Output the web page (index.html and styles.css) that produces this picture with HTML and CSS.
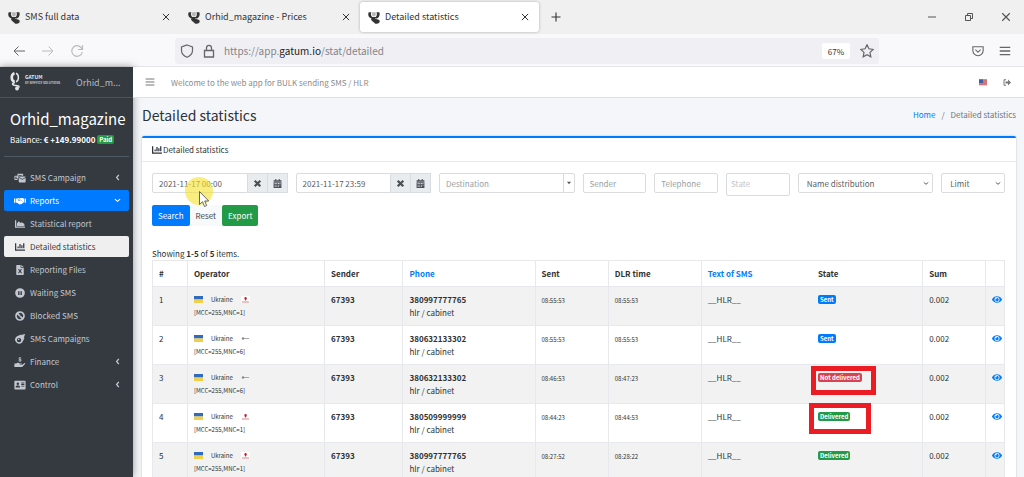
FILE: index.html
```html
<!DOCTYPE html>
<html lang="en">
<head>
<meta charset="utf-8">
<title>Detailed statistics</title>
<link rel="stylesheet" href="styles.css">
</head>
<body>
<svg class="sprite" aria-hidden="true">
  <symbol id="i-eye" viewBox="0 0 576 512"><path d="M572.52 241.4C518.29 135.59 410.93 64 288 64S57.68 135.64 3.48 241.41a32.35 32.35 0 0 0 0 29.19C57.71 376.41 165.07 448 288 448s230.32-71.64 284.52-177.41a32.35 32.35 0 0 0 0-29.19zM288 400a144 144 0 1 1 144-144 143.93 143.93 0 0 1-144 144zm0-240a95.31 95.31 0 0 0-25.31 3.79 47.85 47.85 0 0 1-66.9 66.9A95.78 95.78 0 1 0 288 160z"/></symbol>
  <symbol id="i-bar" viewBox="0 0 512 512"><path d="M0 64h64v320h448v64H0zM128 224h64v96h-64zM224 96h64v224h-64zM320 160h64v160h-64zM416 64h64v256h-64z"/></symbol>
  <symbol id="i-area" viewBox="0 0 512 512"><path d="M0 64h64v320h448v64H0zM96 352V230l96-118 96 96 64-48 128 90v102z"/></symbol>
  <symbol id="i-mail" viewBox="0 0 576 512"><path d="M160 32h288v110h-80v-30H208v144h-48v96H32c-18 0-32-14-32-32V176c0-18 14-32 32-32h128zM240 176h304c18 0 32 12 32 28L408 310 224 204c0-16 6-28 16-28zM224 246l184 104 168-104v202c0 18-14 32-32 32H256c-18 0-32-14-32-32zM30 190h100v40H30zM30 260h100v30H30z" fill-rule="evenodd"/></symbol>
  <symbol id="i-hands" viewBox="0 0 640 512"><path d="M0 128h64v224H0zM96 128h100l60-32h64l-96 96c-10 50 50 90 96 40l40-24 136 116c10 60-40 60-60 60-20 40-50 50-74 36-24 30-60 24-78 8L160 350H96zM350 96h100l60 32h34v210h-26L370 190l-86 30c-20 10-36-6-24-24zM576 128h64v224h-64z"/></symbol>
  <symbol id="i-file" viewBox="0 0 384 512"><path fill-rule="evenodd" d="M24 0h200v136h160v352c0 14-10 24-24 24H24c-14 0-24-10-24-24V24C0 10 10 0 24 0zM256 0l128 104H256zM90 210l64 100-66 106h58l46-72 46 72h58l-66-106 64-100h-56l-46 68-46-68z"/></symbol>
  <symbol id="i-pause" viewBox="0 0 512 512"><path fill-rule="evenodd" d="M256 8a248 248 0 1 0 0 496 248 248 0 0 0 0-496zM160 160h72v192h-72zM280 160h72v192h-72z"/></symbol>
  <symbol id="i-ban" viewBox="0 0 512 512"><path fill-rule="evenodd" d="M256 8a248 248 0 1 0 0 496 248 248 0 0 0 0-496zM115 180l217 217A158 158 0 0 1 115 180zM180 115a158 158 0 0 1 217 217zM210 190l90 0 24 100z"/></symbol>
  <symbol id="i-meteor" viewBox="0 0 512 512"><path fill-rule="evenodd" d="M491 1C452 12 380 34 307 61l7-41C240 44 150 80 72 140a200 200 0 1 0 292 292c50-70 100-180 128-236l-42 8c26-70 50-150 61-187 2-10-8-19-20-16zM208 200a112 112 0 1 1 0 224 112 112 0 0 1 0-224zM190 240a36 36 0 1 0 0 72 36 36 0 0 0 0-72z"/></symbol>
  <symbol id="i-money" viewBox="0 0 576 512"><path d="M0 328h100c70-50 140-20 180 0h90c30 10 24 50-10 56h-90v20h110l130-90c30-14 60 14 36 46L410 496c-10 10-20 16-34 16H0zM270 0h36v30c34 4 50 20 56 44h-44c-10-22-70-14-52 12 20 20 96 16 98 78 0 40-26 54-58 60v32h-36v-32c-40-4-58-24-62-54h46c10 30 72 22 62-6-20-24-98-16-98-78 0-30 20-52 52-56z"/></symbol>
  <symbol id="i-card" viewBox="0 0 576 512"><path fill-rule="evenodd" d="M48 32h480c28 0 48 20 48 48v352c0 28-20 48-48 48H48c-28 0-48-20-48-48V80c0-28 20-48 48-48zM176 128a64 64 0 1 0 0 128 64 64 0 0 0 0-128zM64 380h224c0-60-40-96-70-96h-84c-40 0-70 40-70 96zM352 130h160v44H352zM352 210h160v40H352zM352 290h160v40H352z"/></symbol>
  <symbol id="i-left" viewBox="0 0 10 16"><path d="M8 2 3 8l5 6" fill="none" stroke="currentColor" stroke-width="3"/></symbol>
  <symbol id="i-down" viewBox="0 0 16 10"><path d="m2 2 6 5 6-5" fill="none" stroke="currentColor" stroke-width="2.5"/></symbol>
  <symbol id="i-cal" viewBox="0 0 448 512"><path fill-rule="evenodd" d="M96 0h60v64h136V0h60v64h96v96H0V64h96zM0 184h448v328H0zM60 230v50h60v-50zM160 230v50h50v-50zM250 230v50h50v-50zM340 230v50h50v-50zM60 320v50h60v-50zM160 320v50h50v-50zM250 320v50h50v-50zM340 320v50h50v-50zM60 410v50h60v-50zM160 410v50h50v-50zM250 410v50h50v-50z"/></symbol>
  <symbol id="i-times" viewBox="0 0 16 16"><path d="m3 3 10 10M13 3 3 13" fill="none" stroke="currentColor" stroke-width="4"/></symbol>
  <symbol id="i-close" viewBox="0 0 16 16"><path d="m3 3 10 10M13 3 3 13" fill="none" stroke="currentColor" stroke-width="1.6"/></symbol>
  <symbol id="i-bars" viewBox="0 0 16 16"><path d="M1 3.2h14M1 8h14M1 12.8h14" fill="none" stroke="currentColor" stroke-width="1.8"/></symbol>
  <symbol id="i-gatum" viewBox="0 0 16 16"><path d="M2 2.500h3c-.8 2-.5 4 1 5.500h4c1.500-1.500 1.600-3.500.8-5.500h3.400c.8 3-.2 6-2.700 7.300H9c0 .9 5 .4 5.500 2.900.3 2-1.500 3-3.500 3-2.500 0-2.500-1.600-4.500-2.700C4.500 12 4.500 10.500 5 9.500 1.500 8.500.8 5 2 2.500z" fill="#333"/><path d="M6 2.500h3.800c.6 2 .3 3.500-.8 4.500H6.800C5.700 6 5.500 4 6 2.500z" fill="#b5b5b5"/></symbol>
  <symbol id="i-ua" viewBox="0 0 9 7"><path d="M0 0h9v3.5H0z" fill="#2f6cc0"/><path d="M0 3.5h9V7H0z" fill="#f2cf4a"/></symbol>
  <symbol id="i-voda" viewBox="0 0 9 7"><path d="M0 0h9v7H0z" fill="#fff"/><path d="M4.500 1a1.300 1.300 0 0 1 1 2.200L4.800 4.600h-.7L3.700 3.200A1.300 1.300 0 0 1 4.500 1z" fill="#c5222b"/><path d="M1 5.500h7v1H1z" fill="#d78288"/></symbol>
  <symbol id="i-life" viewBox="0 0 9 7"><path d="M1 3.500h7" stroke="#a5a8aa" stroke-width="1"/><circle cx="2" cy="3.500" r="1.200" fill="#888"/></symbol>
</svg>

<div class="browser">
  <header class="tabs">
    <div class="tab"><svg class="fav"><use href="#i-gatum"/></svg><span>SMS full data</span><button class="plain" aria-label="Close tab"><svg class="ico10"><use href="#i-close"/></svg></button></div>
    <div class="tab"><svg class="fav"><use href="#i-gatum"/></svg><span>Orhid_magazine - Prices</span><button class="plain" aria-label="Close tab"><svg class="ico10"><use href="#i-close"/></svg></button></div>
    <div class="tab tab-on"><svg class="fav"><use href="#i-gatum"/></svg><span>Detailed statistics</span><button class="plain" aria-label="Close tab"><svg class="ico10"><use href="#i-close"/></svg></button></div>
    <button class="plain newtab" aria-label="New tab"><svg class="ico12" viewBox="0 0 16 16"><path d="M8 2v12M2 8h12" fill="none" stroke="currentColor" stroke-width="1.500"/></svg></button>
    <div class="wins">
      <button class="plain" aria-label="Minimize"><svg class="ico12" viewBox="0 0 12 12"><path d="M2 6h8" stroke="currentColor"/></svg></button>
      <button class="plain" aria-label="Restore"><svg class="ico12" viewBox="0 0 12 12"><path d="M2.500 4.500h5v5h-5zM4.500 4V2.500h5v5H8" fill="none" stroke="currentColor"/></svg></button>
      <button class="plain" aria-label="Close window"><svg class="ico12"><use href="#i-close"/></svg></button>
    </div>
  </header>

  <nav class="toolbar" aria-label="Browser">
    <button class="plain" aria-label="Back"><svg class="ico14" viewBox="0 0 14 14"><path d="M13 7H2M6.500 2.500 2 7l4.500 4.500" fill="none" stroke="currentColor"/></svg></button>
    <button class="plain dim" aria-label="Forward"><svg class="ico14" viewBox="0 0 14 14"><path d="M1 7h11M7.500 2.500 12 7l-4.500 4.500" fill="none" stroke="currentColor"/></svg></button>
    <button class="plain dim" aria-label="Reload"><svg class="ico14" viewBox="0 0 14 14"><path d="M12 5A5.300 5.300 0 1 0 12.300 8M12.500 1v4.500H8" fill="none" stroke="currentColor" stroke-width="1.200"/></svg></button>
    <div class="address">
      <svg class="ico14" viewBox="0 0 14 14"><path d="M7 1 12.500 3v3.500C12.500 10 10 12 7 13.300 4 12 1.500 10 1.500 6.500V3z" fill="none" stroke="currentColor" stroke-width="1.200"/></svg>
      <svg class="ico14" viewBox="0 0 14 14"><path d="M2.500 6.500h9v6.500h-9zM4.500 6.500V4a2.500 2.700 0 0 1 5 0v2.500" fill="none" stroke="currentColor" stroke-width="1.300"/></svg>
      <span class="url">https://app.<b>gatum.io</b>/stat/detailed</span>
      <button class="zoom">67%</button>
      <button class="plain" aria-label="Bookmark"><svg class="ico14" viewBox="0 0 14 14"><path d="m7 .8 1.900 4 4.300.600-3.200 3 .800 4.400L7 10.700l-3.800 2.100.800-4.400-3.200-3 4.300-.600z" fill="none" stroke="currentColor" stroke-width="1.200"/></svg></button>
    </div>
    <button class="plain pocket" aria-label="Pocket"><svg class="ico12" viewBox="0 0 14 14"><path d="M1 2h12v4.500a6 6 0 0 1-12 0zM4 5.500l3 3 3-3" fill="none" stroke="currentColor" stroke-width="1.300"/></svg></button>
    <button class="plain" aria-label="Menu"><svg class="ico12"><use href="#i-bars"/></svg></button>
  </nav>

  <div class="app">
    <aside class="side">
      <a class="brand" href="#">
        <svg class="logo" viewBox="0 0 54 20"><g fill="none" stroke="#e4e6e8"><path d="M4.500 1.200C.8 2.500.8 8.500 4.500 9.800" stroke-width="2.600"/><path d="M6 1.200c3.200 1.200 3.200 7.400 0 8.600" stroke-width="1.500"/><path d="M5 10.500c-4 .8-2.500 3 .5 3 3 0 4 1 3 2" stroke-width="1.700"/></g><circle cx="7" cy="16.500" r="1.900" fill="#e4e6e8"/><text x="15" y="7" class="logo-a">GATUM</text><text x="15" y="12" class="logo-b">BY SEMYICE SOLUTIONS</text></svg>
        <span>Orhid_m...</span>
      </a>
      <div class="user">
        <h2>Orhid_magazine</h2>
        <p>Balance: <b>€ +149.99000</b> <span class="badge green">Paid</span></p>
      </div>
      <nav class="menu" aria-label="Main">
        <a href="#"><svg><use href="#i-mail"/></svg><span>SMS Campaign</span><svg class="arr"><use href="#i-left"/></svg></a>
        <a href="#" class="blue"><svg><use href="#i-hands"/></svg><span>Reports</span><svg class="arr"><use href="#i-down"/></svg></a>
        <a href="#"><svg><use href="#i-area"/></svg><span>Statistical report</span></a>
        <a href="#" class="light"><svg><use href="#i-bar"/></svg><span>Detailed statistics</span></a>
        <a href="#"><svg><use href="#i-file"/></svg><span>Reporting Files</span></a>
        <a href="#"><svg><use href="#i-pause"/></svg><span>Waiting SMS</span></a>
        <a href="#"><svg><use href="#i-ban"/></svg><span>Blocked SMS</span></a>
        <a href="#"><svg><use href="#i-meteor"/></svg><span>SMS Campaigns</span></a>
        <a href="#"><svg><use href="#i-money"/></svg><span>Finance</span><svg class="arr"><use href="#i-left"/></svg></a>
        <a href="#"><svg><use href="#i-card"/></svg><span>Control</span><svg class="arr"><use href="#i-left"/></svg></a>
      </nav>
    </aside>

    <div class="content">
      <div class="topbar">
        <button class="plain" aria-label="Toggle menu"><svg class="ico10"><use href="#i-bars"/></svg></button>
        <span class="welcome">Welcome to the web app for BULK sending SMS / HLR</span>
        <button class="plain" aria-label="Language"><svg class="flag" viewBox="0 0 8 6"><path d="M0 0h8v6H0z" fill="#e7a0a0"/><path d="M0 .5h8M0 2.500h8M0 4.500h8" stroke="#c8474d"/><path d="M0 0h4v3.500H0z" fill="#3f5f9f"/></svg></button>
        <button class="plain" aria-label="Log out"><svg class="flag" viewBox="0 0 16 14"><path d="M6 1.500H2v11h4" fill="none" stroke="currentColor" stroke-width="2"/><path d="M5 5h5V1l6 6-6 6V9H5z" fill="currentColor"/></svg></button>
      </div>
      <div class="head">
        <h1>Detailed statistics</h1>
        <nav class="crumbs" aria-label="Breadcrumb"><a href="#">Home</a><span>/</span><span>Detailed statistics</span></nav>
      </div>

      <main class="card">
        <h3 class="card-head"><svg class="ico10"><use href="#i-bar"/></svg>Detailed statistics</h3>
        <div class="card-body">
          <form>
            <div class="filters">
              <div class="group w2"><input aria-label="From" value="2021-11-17 00:00"><button type="button" aria-label="Clear from"><svg><use href="#i-times"/></svg></button><button type="button" aria-label="Pick from"><svg><use href="#i-cal"/></svg></button>
                <svg class="pointer" viewBox="0 0 28 32"><circle cx="14" cy="14" r="14" fill="#f7e12a" fill-opacity=".6"/><path d="M14.500 14.500v13l3-2.800 2 4.800 2.200-1-2-4.500h4z" fill="#fff" stroke="#444" stroke-width=".8"/></svg>
              </div>
              <div class="group w2"><input aria-label="To" value="2021-11-17 23:59"><button type="button" aria-label="Clear to"><svg><use href="#i-times"/></svg></button><button type="button" aria-label="Pick to"><svg><use href="#i-cal"/></svg></button></div>
              <div class="pick split w2"><select class="ph" aria-label="Destination"><option>Destination</option></select><svg class="caret" viewBox="0 0 6 4"><path d="M0 0h6L3 4z"/></svg></div>
              <input aria-label="Sender" placeholder="Sender">
              <input aria-label="Telephone" placeholder="Telephone">
              <input class="state" aria-label="State" placeholder="State">
              <div class="pick w2"><select aria-label="Name distribution"><option>Name distribution</option></select><svg class="caret"><use href="#i-down"/></svg></div>
              <div class="pick"><select aria-label="Limit"><option>Limit</option></select><svg class="caret"><use href="#i-down"/></svg></div>
            </div>
            <div class="actions"><button class="btn primary">Search</button><button type="reset" class="btn">Reset</button><button type="button" class="btn success">Export</button></div>
          </form>
          <p class="summary">Showing <b>1-5</b> of <b>5</b> items.</p>
          <table>
            <colgroup><col class="c-n"><col class="c-op"><col class="c-snd"><col class="c-ph"><col class="c-t"><col class="c-dlr"><col class="c-txt"><col class="c-st"><col class="c-sum"><col class="c-eye"></colgroup>
            <thead><tr><th>#</th><th>Operator</th><th>Sender</th><th><a href="#">Phone</a></th><th>Sent</th><th>DLR time</th><th><a href="#">Text of SMS</a></th><th class="nb">State</th><th>Sum</th><th></th></tr></thead>
            <tbody>
              <tr><td>1</td><td><div class="op"><svg><use href="#i-ua"/></svg><span>Ukraine</span><svg><use href="#i-voda"/></svg></div><div class="mcc">[MCC=255,MNC=1]</div></td><td><b>67393</b></td><td><b>380997777765</b><br>hlr / cabinet</td><td><small>08:55:53</small></td><td><small>08:55:53</small></td><td>__HLR__</td><td class="nb"><span class="badge sent">Sent</span></td><td>0.002</td><td><a href="#" aria-label="View"><svg class="eye"><use href="#i-eye"/></svg></a></td></tr>
              <tr><td>2</td><td><div class="op"><svg><use href="#i-ua"/></svg><span>Ukraine</span><svg><use href="#i-life"/></svg></div><div class="mcc">[MCC=255,MNC=6]</div></td><td><b>67393</b></td><td><b>380632133302</b><br>hlr / cabinet</td><td><small>08:55:53</small></td><td><small>08:55:53</small></td><td>__HLR__</td><td class="nb"><span class="badge sent">Sent</span></td><td>0.002</td><td><a href="#" aria-label="View"><svg class="eye"><use href="#i-eye"/></svg></a></td></tr>
              <tr><td>3</td><td><div class="op"><svg><use href="#i-ua"/></svg><span>Ukraine</span><svg><use href="#i-life"/></svg></div><div class="mcc">[MCC=255,MNC=6]</div></td><td><b>67393</b></td><td><b>380632133302</b><br>hlr / cabinet</td><td><small>08:46:53</small></td><td><small>08:47:23</small></td><td>__HLR__</td><td class="nb"><span class="badge red">Not delivered</span><i class="mark mark-a"></i></td><td>0.002</td><td><a href="#" aria-label="View"><svg class="eye"><use href="#i-eye"/></svg></a></td></tr>
              <tr><td>4</td><td><div class="op"><svg><use href="#i-ua"/></svg><span>Ukraine</span><svg><use href="#i-voda"/></svg></div><div class="mcc">[MCC=255,MNC=1]</div></td><td><b>67393</b></td><td><b>380509999999</b><br>hlr / cabinet</td><td><small>08:44:23</small></td><td><small>08:44:53</small></td><td>__HLR__</td><td class="nb"><span class="badge green">Delivered</span><i class="mark mark-b"></i></td><td>0.002</td><td><a href="#" aria-label="View"><svg class="eye"><use href="#i-eye"/></svg></a></td></tr>
              <tr><td>5</td><td><div class="op"><svg><use href="#i-ua"/></svg><span>Ukraine</span><svg><use href="#i-voda"/></svg></div><div class="mcc">[MCC=255,MNC=1]</div></td><td><b>67393</b></td><td><b>380997777765</b><br>hlr / cabinet</td><td><small>08:27:52</small></td><td><small>08:28:22</small></td><td>__HLR__</td><td class="nb"><span class="badge green">Delivered</span></td><td>0.002</td><td><a href="#" aria-label="View"><svg class="eye"><use href="#i-eye"/></svg></a></td></tr>
            </tbody>
          </table>
        </div>
      </main>
    </div>
  </div>
</div>
</body>
</html>
```
FILE: styles.css
```css
* { box-sizing: border-box; }
body { margin: 0; font: 8px/13px "Noto Sans CJK SC", "Noto Sans", sans-serif; color: #2d3236; }
h1, h2, h3, p { margin: 0; font-weight: 400; }
a { color: #007bff; text-decoration: none; }
svg { display: block; fill: currentColor; flex: none; }
input, select, button { font: inherit; color: inherit; }
.sprite { position: absolute; width: 0; height: 0; }
.plain { display: flex; align-items: center; border: 0; padding: 0; background: none; }
.ico10 { width: 10px; height: 10px; }
.ico12 { width: 12px; height: 12px; }
.ico14 { width: 14px; height: 14px; }

.browser { display: flex; flex-direction: column; height: 100vh; overflow: hidden; background: #f9f9fb; }
.tabs { flex: none; display: flex; align-items: center; height: 34px; background: #f0f0f0; color: #333; font-size: 9px; line-height: 16px; }
.tab { display: flex; align-items: center; gap: 4px; width: 180px; height: 30px; padding: 0 9px 0 7px; }
.tab span { flex: 1; }
.tab-on { width: 179px; background: #fff; border-radius: 3px; box-shadow: 0 0 3px #aaa; }
.fav { width: 14px; height: 14px; }
.newtab { margin-left: 11px; }
.wins { display: flex; gap: 25px; margin-left: auto; padding-right: 12px; color: #555; }

.toolbar { flex: none; display: flex; align-items: center; gap: 15px; height: 33px; padding: 2px 13px 0 12px; color: #666; border-bottom: 1px solid #e6e6ea; }
.dim { color: #bbb; }
.address { flex: 1; display: flex; align-items: center; gap: 8px; height: 26px; margin: 0 0 0 76px; padding: 0 5px; border-radius: 3px; background: #f0f0f4; }
.url { flex: 1; color: #85858b; font-size: 10px; line-height: 16px; }
.url b { color: #222; font-weight: 400; }
.zoom { height: 16px; margin-right: 2px; padding: 0 6px; border: 0; border-radius: 2px; background: #fff; font-size: 8px; color: #333; }
.pocket { margin-left: 78px; }

.app { flex: 1; display: flex; min-height: 0; background: #f4f6f9; }
.side { flex: none; width: 133px; background: #343a40; color: #c2c7d0; box-shadow: 0 0 8px rgba(0, 0, 0, .4); }
.brand { display: flex; align-items: center; gap: 12px; height: 31px; padding: 0 10px; border-bottom: 1px solid #4b545c; color: #b4b9be; font-size: 9px; }
.logo { width: 54px; height: 20px; overflow: visible; }
.logo-a { font-size: 5px; font-weight: 700; fill: #e4e6e8; }
.logo-b { font-size: 3px; font-weight: 700; fill: #c4c8cc; }
.user { margin: 0 4px; padding: 10px 6px 10px; border-bottom: 1px solid #4f5962; color: #fff; white-space: nowrap; }
.user h2 { font-size: 15px; line-height: 21px; }
.user p { margin-top: 4px; }
.menu { display: grid; gap: 2px; padding: 10px 4px; }
.menu a { display: flex; align-items: center; gap: 4px; height: 21px; padding: 0 8px 0 10px; border-radius: 2px; color: #c2c7d0; }
.menu svg { width: 12px; height: 10px; }
.menu span { flex: 1; }
.menu .arr { width: 7px; height: 7px; }
.menu .blue { background: #007bff; color: #fff; }
.menu .light { background: #efefef; color: #343a40; }

.content { flex: 1; min-width: 0; overflow: hidden; }
.topbar { display: flex; align-items: center; gap: 16px; height: 31px; padding: 0 13px 0 12px; background: #fff; border-bottom: 1px solid #dee2e6; color: #777; }
.welcome { flex: 1; color: #8c8c8c; }
.flag { width: 8px; height: 7px; }
.head { display: flex; justify-content: space-between; align-items: center; height: 38px; padding: 0 8px 5px 9px; }
h1 { font-size: 14px; line-height: 20px; }
.crumbs { display: flex; gap: 6px; color: #6c757d; }
.card { margin: 0 8px 0 9px; background: #fff; border-top: 2px solid #007bff; border-radius: 2px; box-shadow: 0 0 2px rgba(0, 0, 0, .25); }
.card-head { display: flex; align-items: center; gap: 1px; height: 24px; padding: 0 10px; border-bottom: 1px solid #e9e9e9; font-size: 8px; }
.card-body { padding: 11px; padding-left: 10px; }

.filters { display: grid; grid-template-columns: repeat(12, minmax(0, 1fr)); gap: 8px; height: 32px; align-items: start; }
.w2 { grid-column: span 2; }
.filters input, .filters select { width: 100%; min-width: 0; height: 20px; padding: 0 6px; border: 1px solid #d8dce0; border-radius: 2px; background: #fff; color: #5a6066; appearance: none; outline: 0; }
.filters ::placeholder { color: #999fa5; opacity: 1; }
.filters .state { height: 23px; padding: 0 4px 2px; }
.filters .state::placeholder { color: #c4c4c4; }
.group { position: relative; display: flex; }
.group button { flex: none; display: grid; place-items: center; width: 20px; padding: 0; border: 1px solid #d8dce0; border-left-width: 0; background: #e9ecef; color: #495057; }
.group button svg { width: 9px; height: 9px; }
.group input { border-radius: 2px 0 0 2px; }
.pointer { position: absolute; left: 33px; top: 4px; width: 28px; height: 32px; z-index: 1; }
.pick { position: relative; }
.filters .pick select { padding-left: 8px; }
.filters .pick .ph { padding-left: 6px; color: #999fa5; }
.caret { position: absolute; right: 4px; top: 8px; width: 6px; height: 5px; color: #555; pointer-events: none; }
.split::after { content: ""; position: absolute; right: 11px; top: 0; width: 1px; height: 20px; background: #d8dce0; }
.split .caret { right: 4px; width: 4px; height: 4px; }
.actions { display: flex; }
.btn { height: 21px; padding: 0 6px; border: 0; border-radius: 2px; background: #f8f9fa; color: #444; }
.primary { background: #007bff; color: #fff; }
.success { background: #239a45; color: #fff; }
.summary { margin: 21px 0 0; }

table { width: 100%; table-layout: fixed; border-collapse: collapse; border: 1px solid #e6e8eb; }
th, td { padding: 6px; border: 1px solid #e6e8eb; border-width: 1px 0 0 1px; text-align: left; vertical-align: top; white-space: nowrap; }
.nb { border-left: 0; position: relative; padding-left: 7px; }
tbody tr:nth-child(odd) { background: #f2f2f2; }
td { height: 39px; }
.c-n { width: 4.1%; }
.c-op { width: 16.1%; }
.c-snd { width: 9.2%; }
.c-ph { width: 15.5%; }
.c-t { width: 8.6%; }
.c-dlr { width: 10.9%; }
.c-txt { width: 12.9%; }
.c-st { width: 13.1%; }
.c-sum { width: 7.4%; }
.c-eye { width: 2.2%; }
small { font-size: 6px; }
.op { display: flex; align-items: center; gap: 8px; font-size: 6px; }
.op svg { width: 9px; height: 7px; }
.mcc { font-size: 6px; }
.eye { width: 10px; height: 9px; margin-top: 2px; }
td:last-child { padding-right: 0; }
.badge { display: inline-block; padding: 0 2px; border-radius: 2px; color: #fff; font-size: 6px; font-weight: 700; line-height: 9px; vertical-align: top; margin-top: 2px; }
.sent { background: #007bff; }
.green { background: #239a45; }
.red { background: #d9434f; }
.mark { position: absolute; border: 5px solid #eb1c24; z-index: 1; }
.mark-a { left: 0; top: 1px; width: 65px; height: 29px; }
.mark-b { left: -2px; top: -1px; width: 62px; height: 31px; }
```
